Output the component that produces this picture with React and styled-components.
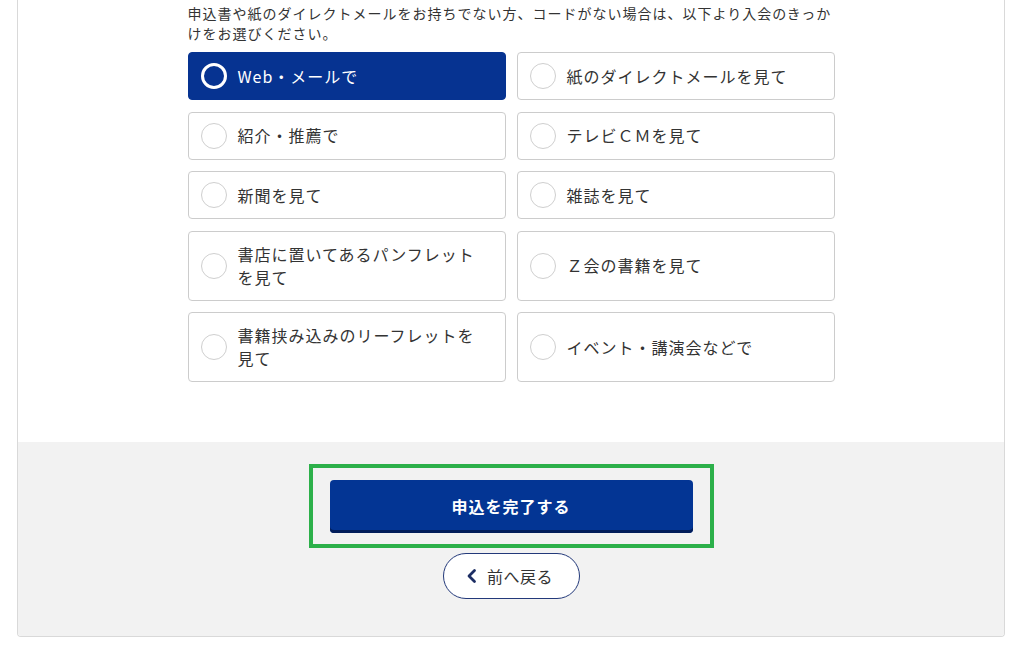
import React, { useState } from "react";
import styled, { createGlobalStyle } from "styled-components";

const GlobalStyle = createGlobalStyle`
  html, body {
    margin: 0;
    padding: 0;
    background: #ffffff;
  }
  body {
    font-family: "Noto Sans CJK JP", "Noto Sans", sans-serif;
    color: #333333;
    overflow: hidden;
  }
`;

const Card = styled.div`
  width: 988px;
  margin-left: 17px;
  box-sizing: border-box;
  border: 1px solid #d9d9d9;
  border-top: none;
  border-radius: 0 0 4px 4px;
  background: #ffffff;
  overflow: hidden;
`;

const Body = styled.section`
  width: 647px;
  margin: 0 auto;
  padding: 4px 0 60px;
`;

const Lead = styled.p`
  margin: 0 0 9px;
  font-size: 14px;
  line-height: 19.5px;
  letter-spacing: 1px;
  color: #333333;
`;

const Choices = styled.div`
  display: grid;
  grid-template-columns: 318px 318px;
  column-gap: 11px;
  row-gap: 11.5px;
`;

const Choice = styled.label`
  display: flex;
  align-items: center;
  box-sizing: border-box;
  min-height: 48px;
  padding: 0 24px 0 12px;
  border: 1px solid ${(p) => (p.$active ? "#063391" : "#cccccc")};
  border-radius: 4px;
  background: ${(p) => (p.$active ? "#063391" : "#ffffff")};
  color: ${(p) => (p.$active ? "#ffffff" : "#333333")};
  cursor: pointer;
`;

const Dot = styled.span`
  flex: none;
  box-sizing: border-box;
  width: 26px;
  height: 26px;
  border-radius: 50%;
  border: ${(p) => (p.$active ? "3.5px solid #ffffff" : "1px solid #cfcfcf")};
  background: ${(p) => (p.$active ? "transparent" : "#ffffff")};
  margin-right: 11px;
`;

const ChoiceText = styled.span`
  padding: 11px 0;
  font-size: 16px;
  line-height: 23px;
  letter-spacing: 1px;
`;

const Footer = styled.div`
  background: #f2f2f2;
  padding: 22px 0 37px;
  display: flex;
  flex-direction: column;
  align-items: center;
`;

const Highlight = styled.div`
  box-sizing: border-box;
  width: 405px;
  padding: 12px 17px 11px;
  border: 4px solid #2cb04a;
`;

const SubmitButton = styled.button`
  display: block;
  width: 100%;
  height: 53px;
  border: none;
  border-radius: 4px;
  background: #033594;
  box-shadow: inset 0 -3px 0 #021d5a;
  color: #ffffff;
  font-family: inherit;
  font-size: 16px;
  font-weight: 700;
  letter-spacing: 1px;
  padding: 0 0 2px;
  cursor: pointer;
`;

const BackButton = styled.button`
  margin-top: 5px;
  box-sizing: border-box;
  width: 137px;
  height: 46px;
  display: flex;
  align-items: center;
  justify-content: center;
  gap: 8px;
  border: 1.5px solid #23397a;
  border-radius: 23px;
  background: #ffffff;
  color: #333333;
  font-family: inherit;
  font-size: 16px;
  letter-spacing: 0.5px;
  padding: 0 4px 0 0;
  cursor: pointer;
`;

const options = [
  "Web・メールで",
  "紙のダイレクトメールを見て",
  "紹介・推薦で",
  "テレビＣＭを見て",
  "新聞を見て",
  "雑誌を見て",
  "書店に置いてあるパンフレットを見て",
  "Ｚ会の書籍を見て",
  "書籍挟み込みのリーフレットを見て",
  "イベント・講演会などで",
];

const ChevronLeft = () => (
  <svg width="14" height="16" viewBox="0 0 14 16" aria-hidden="true">
    <path
      d="M9.5 2.5 L4 8 L9.5 13.5"
      fill="none"
      stroke="#1c2d63"
      strokeWidth="2.8"
      strokeLinecap="round"
      strokeLinejoin="round"
    />
  </svg>
);

export default function App() {
  const [selected, setSelected] = useState(0);

  return (
    <>
      <GlobalStyle />
      <Card>
        <Body>
          <Lead>
            申込書や紙のダイレクトメールをお持ちでない方、コードがない場合は、以下より入会のきっかけをお選びください。
          </Lead>
          <Choices>
            {options.map((label, i) => (
              <Choice
                key={label}
                $active={selected === i}
                onClick={() => setSelected(i)}
              >
                <Dot $active={selected === i} />
                <ChoiceText>{label}</ChoiceText>
              </Choice>
            ))}
          </Choices>
        </Body>
        <Footer>
          <Highlight>
            <SubmitButton>申込を完了する</SubmitButton>
          </Highlight>
          <BackButton>
            <ChevronLeft />
            前へ戻る
          </BackButton>
        </Footer>
      </Card>
    </>
  );
}
